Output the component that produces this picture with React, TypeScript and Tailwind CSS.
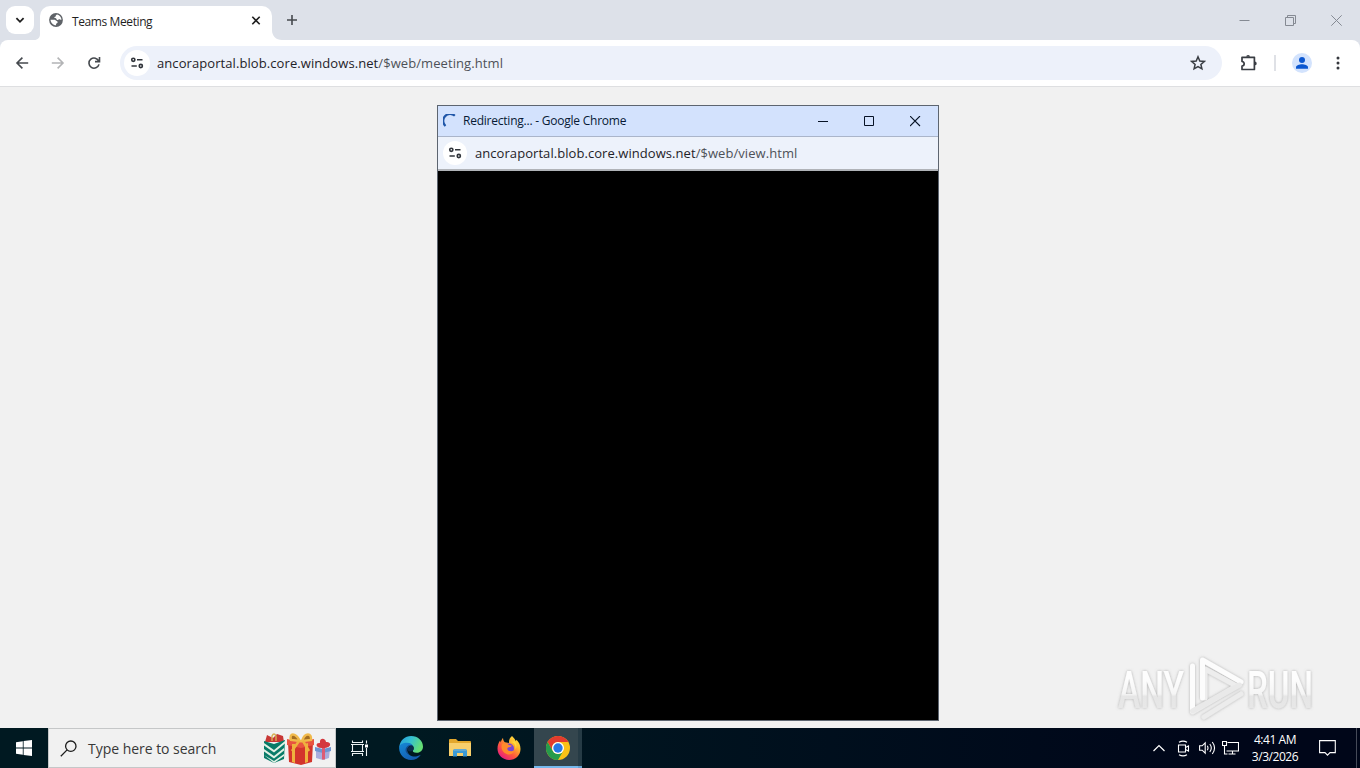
import type { ReactNode } from 'react';

const UI = "font-['Open_Sans','Noto_Sans',sans-serif]";

function TuneIcon() {
  return (
    <svg width="14" height="12" viewBox="0 0 14 12" fill="none" stroke="#30343a" strokeWidth="1.600">
      <circle cx="3.300" cy="2.800" r="1.600" />
      <path d="M7 2.800H12.500M1.500 9h5.300" />
      <circle cx="10.800" cy="9" r="1.600" />
    </svg>
  );
}

function BackIcon({ color, flip = false }: { color: string; flip?: boolean }) {
  return (
    <svg width="14" height="14" viewBox="0 0 14 14" fill="none" stroke={color} strokeWidth="1.600" className={flip ? '-scale-x-100' : ''}>
      <path d="M13.200 7H2M7.400 1.600 2 7l5.400 5.400" />
    </svg>
  );
}

function TabStrip() {
  return (
    <div className="flex h-10 shrink-0 bg-[#dde1e9]">
      <div className="mt-1.5 ml-1.5 flex h-7 w-7 items-center justify-center rounded-[9px] bg-white">
        <svg width="10" height="8" viewBox="0 0 10 8" fill="none" stroke="#1f1f1f" strokeWidth="1.800"><path d="m1.400 2.200 3.600 3.600 3.600-3.600" /></svg>
      </div>
      <svg width="6" height="6" viewBox="0 0 6 6" className="mt-[34px]"><path d="M6 0v6H0c4 0 6-2.500 6-6" fill="#fff" /></svg>
      <div className="mt-1.5 flex h-[34px] w-[232px] rounded-t-[10px] bg-white pt-[7px] pl-[9px]">
        <svg width="14" height="14" viewBox="0 0 14 14">
          <circle cx="7" cy="7" r="6.900" fill="#5f6368" />
          <path d="M8.200 1.500c-1 .3-1.600 1-1.500 1.900-.9.100-1.400.5-1.400 1.400.9.400 1.300.1 1.900.7.500.5.300 1.400 1.200 1.500.900 0 1-.8 1.600-.8.800 0 1.400.5 2.500.6-.1-2.500-1.800-4.600-4.300-5.300M1.500 6.700c.2 3 2.500 5.400 5.600 5.600l-.1-1.600c1.100-.3 1.700-.7 1.600-1.700C8.400 7.700 7 7.800 6.200 6.900 5.700 6.300 3.500 6.900 1.500 6.700" fill="#fff" />
        </svg>
        <span className="mt-px ml-[9px] w-[179px] text-[12px] leading-4 tracking-[-0.400px] whitespace-nowrap text-[#1f1f1f]">Teams Meeting</span>
        <svg width="10" height="9" viewBox="0 0 10 9" className="mt-[3px]" stroke="#1f1f1f" strokeWidth="1.600"><path d="m1.300.8 7.400 7.400M8.700.8 1.300 8.200" /></svg>
      </div>
      <svg width="10" height="10" viewBox="0 0 10 10" className="mt-[30px]"><path d="M0 0v10h10C4 10 0 6 0 0" fill="#fff" /></svg>
      <svg width="10" height="10" viewBox="0 0 10 10" className="mt-[15px] ml-[5px]" stroke="#45494e" strokeWidth="1.600"><path d="M5 0v10M0 5h10" /></svg>
      <div className="mt-[15px] mr-[18px] ml-auto flex gap-[35px]">
        <svg width="11" height="11" viewBox="0 0 11 11" stroke="#858a93"><path d="M.5 5.500h10" /></svg>
        <svg width="11" height="11" viewBox="0 0 11 11" fill="none" stroke="#858a93"><path d="M.5 2.500h8v8h-8zM2.500 2.500v-2h8v8h-2" /></svg>
        <svg width="11" height="11" viewBox="0 0 11 11" stroke="#858a93"><path d="m.3.3 10.400 10.400M10.700.3.3 10.700" /></svg>
      </div>
    </div>
  );
}

function Toolbar() {
  return (
    <div className="flex h-[47px] shrink-0 bg-[#dde1e9]">
      <div className="flex h-[47px] w-full items-center rounded-t-[8px] border-b border-[#dedfe1] bg-white pl-[15px]">
        <BackIcon color="#45494e" />
        <div className="ml-[22px] flex"><BackIcon color="#b3b4b6" flip /></div>
        <svg width="14" height="14" viewBox="0 0 14 14" className="ml-[22px]" fill="none" stroke="#45494e" strokeWidth="1.600">
          <path d="M11.800 5.200A5.100 5.100 0 1 0 12 8.400M12.500 1v4.600H8" />
        </svg>
        <div className="ml-[19px] flex h-[34px] w-[1102px] items-center rounded-full bg-[#edf1fa] pl-[4px]">
          <div className="flex h-[26px] w-[26px] items-center justify-center rounded-full bg-white"><TuneIcon /></div>
          <span className="ml-[7px] text-[13px] leading-5 tracking-[0.080px] whitespace-nowrap text-[#1f2228]">ancoraportal.blob.core.windows.net<span className="text-[#4d5158]">/$web/meeting.html</span></span>
          <svg width="16" height="16" viewBox="0 0 16 16" className="mr-4 ml-auto" fill="none" stroke="#393d43" strokeWidth="1.500">
            <path d="m8 1.800 1.800 4.200 4.500.4-3.400 3 1 4.400L8 11.500l-3.900 2.300 1-4.400-3.400-3 4.500-.4z" />
          </svg>
        </div>
        <svg width="18" height="18" viewBox="0 0 18 18" className="ml-[18px]" fill="none" stroke="#393d43" strokeWidth="1.700">
          <path d="M2 3.300h12.400v12.200H2v-3.400c2.900-.3 2.900-4.300 0-4.600z" strokeLinejoin="round" />
          <path d="M6.200 2.800a1.900 1.900 0 0 1 3.800 0zM14.800 7.500a1.900 1.900 0 0 1 0 3.800z" fill="#393d43" stroke="none" />
        </svg>
        <div className="ml-[16px] h-4 w-[2px] bg-[#dfe1e6]" />
        <svg width="20" height="20" viewBox="0 0 20 20" className="ml-4">
          <circle cx="10" cy="10" r="10" fill="#d3e3fd" />
          <circle cx="10" cy="6.900" r="3" fill="#0b57d0" />
          <path d="M4 15.700v-1.300c0-2.200 3.500-3.100 6-3.100s6 .9 6 3.100v1.300z" fill="#0b57d0" />
        </svg>
        <svg width="4" height="14" viewBox="0 0 4 14" className="ml-6" fill="#35383d"><circle cx="2" cy="2" r="1.500" /><circle cx="2" cy="7" r="1.500" /><circle cx="2" cy="12" r="1.500" /></svg>
      </div>
    </div>
  );
}

function Popup() {
  return (
    <div className="absolute top-[105px] left-[437px] flex h-[616px] w-[502px] flex-col border border-[#5d6570] bg-black">
      <div className="flex h-[31px] shrink-0 items-center border-b border-[#aab5ca] bg-[#d3e2fd] pr-[17px] pl-[5px]">
        <svg width="13" height="15" viewBox="0 0 13 15" fill="none" stroke="#1f56a8" strokeWidth="2.200"><path d="M2.500 12A6 6 0 0 1 11.800 1.700" /></svg>
        <span className="ml-[7px] text-[12px] leading-4 tracking-[-0.230px] whitespace-nowrap text-[#071a35]">Redirecting... - Google Chrome</span>
        <div className="ml-auto flex gap-[35px]">
          <svg width="11" height="11" viewBox="0 0 11 11" stroke="#071225"><path d="M0 5.500h10" /></svg>
          <svg width="11" height="11" viewBox="0 0 11 11" fill="none" stroke="#071225"><path d="M.5.500h9v9H.5z" /></svg>
          <svg width="11" height="11" viewBox="0 0 11 11" stroke="#071225" strokeWidth="1.100"><path d="m0 0 10 10M10 0 0 10" /></svg>
        </div>
      </div>
      <div className="flex h-[34px] shrink-0 items-center border-b-2 border-[#b0b3b8] bg-[#edf2fb] pl-[5px]">
        <div className="flex h-6 w-6 items-center justify-center rounded-full bg-white"><TuneIcon /></div>
        <span className="ml-2 text-[13px] leading-5 tracking-[0.060px] whitespace-nowrap text-[#1f2228]">ancoraportal.blob.core.windows.net<span className="text-[#4d5158]">/$web/view.html</span></span>
      </div>
    </div>
  );
}

function Watermark() {
  return (
    <svg width="250" height="74" viewBox="0 0 250 74" className="absolute top-[651px] left-[1110px]">
      <defs>
        <linearGradient id="fade" x1="0" y1="0" x2="0" y2="1"><stop offset=".3" stopColor="#fdfdfd" /><stop offset=".56" stopColor="#f5f5f5" /><stop offset=".6" stopColor="#e6e6e6" /><stop offset="1" stopColor="#e8e8e8" /></linearGradient>
        <filter id="soft" x="-10%" y="-10%" width="120%" height="120%"><feDropShadow dx="0" dy="0" stdDeviation="1.500" floodColor="#777" floodOpacity=".55" /></filter>
      </defs>
      <g filter="url(#soft)" fontFamily="Roboto, sans-serif" fontWeight="500" fontSize="51" fill="url(#fade)">
        <text x="8" y="57" textLength="66" lengthAdjust="spacingAndGlyphs">ANY</text>
        <text x="137" y="57" textLength="66" lengthAdjust="spacingAndGlyphs">RUN</text>
        <g fill="none" strokeLinecap="round" strokeLinejoin="round" strokeWidth="5">
          <path d="m94 66 37-23" stroke="#ececec" />
          <path d="m82.500 61 44-26L95 18v29" stroke="#ededed" />
          <path d="M82.500 60V15M92.500 47V9L131 31" stroke="#fcfcfc" />
          <path d="m82.500 60 47-26" stroke="#e9e9e9" />
        </g>
      </g>
    </svg>
  );
}

function Gifts() {
  return (
    <svg width="70" height="36" viewBox="0 0 70 36">
      <path d="m3 12 2-7 6 3 4-4 6 2 1 6z" fill="#c83735" />
      <path d="M10 11V6q2-4 4 0v5" stroke="#d5af52" strokeWidth="1.400" fill="none" />
      <path d="m2 11 10 3 11-4-1 19-10 4-10-5z" fill="#087b68" />
      <path d="m2 13 10 7L23 11v2.500l-11 9L2 15.500zM2 19l10 7 10-8v2.500l-10 8-10-7zM2 25l10 6 10-7v2l-10 7z" fill="#e2f1e5" />
      <path d="m26 12 13 4 12-4-1 20-11 3-12-3z" fill="#d3342c" />
      <path d="m25 9 14 3 13-3v6l-13 3-14-3z" fill="#e85340" />
      <path d="M30 14v18l3 1V14zM43 14v19l3-1V13z" fill="#efb13e" />
      <path d="M38 11C33 2 27 3 29 10zm2 0c3-9 10-8 9-1z" fill="#a36d22" stroke="#f0b94b" strokeWidth="2.400" />
      <path d="m37 11-7 10M41 11l6 10" stroke="#efb13e" strokeWidth="2.500" />
      <path d="m54 19 7 2 7-2-1 9-6 2-7-2z" fill="#a9addd" />
      <path d="m53 17 8 2 8-2v4l-8 2-8-2z" fill="#6e94d0" />
      <path d="M61 18c-8 1-8-6-3-5-1-6 6-5 6-1 5-1 7 6-3 6z" fill="#d4383e" />
      <path d="M60 18v11.500h3V18z" fill="#dd5c75" />
    </svg>
  );
}

function EdgeIcon() {
  return (
    <svg width="24" height="24" viewBox="0 0 24 24">
      <defs>
        <linearGradient id="eg" x1="0" y1="0" x2="1" y2=".4"><stop stopColor="#2499dc" /><stop offset=".5" stopColor="#35c0d1" /><stop offset="1" stopColor="#65de74" /></linearGradient>
        <linearGradient id="eb" x1="0" y1="0" x2=".7" y2="1"><stop stopColor="#1689d6" /><stop offset="1" stopColor="#135aad" /></linearGradient>
      </defs>
      <path d="M.3 11C1 4.300 6 0 12.100 0 19 0 24 5 24 10.500c0 4-3 6.300-6.500 6.300-3 0-4.200-1.200-3.500-2.200 2-2.800.1-6.300-4.500-6.300C4.600 8.300 1.500 9.800.3 11" fill="url(#eg)" />
      <path d="M.1 12C0 8.500 4 6.700 8 6.700c3.500 0 5.500 1.600 6 3.500-3-2-6.700 1.300-5.700 5.200 1.200 4.600 7.200 6.900 13.500 3.300C19.800 22 16 24 12 24 5.400 24 .2 18.600.1 12" fill="url(#eb)" />
      <path d="M14 10.200c-3-2-6.700 1.300-5.700 5.200.4 1.500 1.300 2.700 2.600 3.500-3.500-1-4.800-3.400-4.300-6 .6-3.300 5-5.500 7.400-2.700" fill="#123c79" opacity=".75" />
      <path d="M13.800 14.700c1.300-1.800.9-4-.8-5.300-2.300.1-4.300 1.900-4.800 4.200 1 2 3.100 2.500 5.600 1.100" fill="#0b2b4c" />
    </svg>
  );
}

function FolderIcon() {
  return (
    <svg width="22" height="18" viewBox="0 0 22 18">
      <path d="M0 1q0-1 1-1h6l2 2h12q1 0 1 1v4H0z" fill="#e3a72c" />
      <path d="M0 4h22v13H0z" fill="#f8cf6c" />
      <path d="M4 17.500V12q0-2 2-2h10q2 0 2 2v5.500h-4V14H8v3.500z" fill="#3c9bd6" />
      <path d="M5 10h12v2H5z" fill="#63a9d2" />
    </svg>
  );
}

function FirefoxIcon() {
  return (
    <svg width="24" height="24" viewBox="0 0 24 24">
      <defs><linearGradient id="ff" x1="1" y1="0" x2=".2" y2="1"><stop stopColor="#fff44f" /><stop offset=".35" stopColor="#ffb72b" /><stop offset=".65" stopColor="#ff593b" /><stop offset="1" stopColor="#e31587" /></linearGradient></defs>
      <path d="M15 0c2 2 3.300 3.500 3.800 5.200l.7-1.500C22 6 23.500 9.300 23.500 13c0 6.400-5.100 11-11.400 11S.5 19.200.5 12.800c0-3.300 1-6 2.600-8.200l.7 2C4.100 4.500 5 3 6 2c.1 2 .8 3.300 1.900 4.200L12 7c-.3-3 1-5.500 3-7" fill="url(#ff)" />
      <circle cx="12" cy="12.500" r="5" fill="#7845d7" />
      <path d="M5 8c2-1.700 5-.9 6.800.9l3 .5c-.5 1.600-2.300 1.500-3.700 2.100-1.600.7-.6 3.300 1.700 3.600 2.300.4 3-.6 4.400-.3-1 3-4.400 4.500-7.600 3.100C5 16 3.600 12 5 8" fill="#ff8a2b" />
      <path d="M13 6c4 0 6 3 5.500 7.500 1.700-3 1.100-6-.5-8.300" fill="#ffda3e" />
    </svg>
  );
}

function ChromeIcon() {
  return (
    <svg width="24" height="24" viewBox="0 0 24 24">
      <circle cx="12" cy="12" r="12" fill="#fbc116" />
      <path d="M1.600 6A12 12 0 0 1 22.400 6H12a6 6 0 0 0-5.200 9z" fill="#e33b2e" />
      <path d="M1.600 6A12 12 0 0 0 12 24l5.200-9A6 6 0 0 1 6.800 15z" fill="#269b4b" />
      <circle cx="12" cy="12" r="6" fill="#fff" /><circle cx="12" cy="12" r="4.700" fill="#2778e5" />
    </svg>
  );
}

function AppSlot({ children }: { children: ReactNode }) {
  return <div className="flex h-full w-[49px] items-center justify-center">{children}</div>;
}

function Taskbar() {
  return (
    <div className="flex h-10 shrink-0 items-center bg-linear-to-r from-[#001921] from-30% to-[#000619] to-90%">
      <div className="flex w-12 justify-center">
        <svg width="16" height="16" viewBox="0 0 16 16" fill="#fff"><path d="M0 2.200 6.800 1.200v6.400H0zM7.600 1.100 16 0v7.600H7.600zM0 8.400h6.800v6.400L0 13.800zM7.600 8.400H16V16l-8.400-1.100z" /></svg>
      </div>
      <div className="flex h-10 w-[288px] items-center border border-[#c5c7c8] bg-[#f1f1f1] pr-[3px] pl-[11px]">
        <svg width="17" height="17" viewBox="0 0 17 17" fill="none" stroke="#1d1d1d" strokeWidth="1.300"><circle cx="10.800" cy="6.200" r="5.200" /><path d="m7.100 9.900-6.300 6.300" /></svg>
        <span className="mt-[2px] ml-[11px] text-[14px] leading-5 tracking-[-0.030px] whitespace-nowrap text-[#383838]">Type here to search</span>
        <div className="ml-auto"><Gifts /></div>
      </div>
      <div className="flex w-12 justify-center">
        <svg width="18" height="17" viewBox="0 0 18 17" fill="none" stroke="#edf3f4" strokeWidth="1.100">
          <path d="M1.500.5v2h10v-2M1.500 16v-2.500h10V16M1.500 4.500v7M11.500 4.500v7M0 4.500h13M0 11.500h13M15.500.5v3M15.500 8v8" /><path d="M14 4.500h3v3h-3z" fill="#fff" stroke="none" />
        </svg>
      </div>
      <div className="ml-0.5 flex h-full">
        <AppSlot><EdgeIcon /></AppSlot>
        <AppSlot><FolderIcon /></AppSlot>
        <AppSlot><FirefoxIcon /></AppSlot>
      </div>
      <div className="ml-px flex h-10 w-11 items-center justify-center border-b-2 border-[#76b9ed] bg-[#34464e] pt-0.5 pl-1"><ChromeIcon /></div>
      <div className="h-10 w-1 border-b-2 border-[#67a3d2] bg-[#263b45]" />
      <div className="ml-auto flex h-10 items-center">
        <svg width="12" height="8" viewBox="0 0 12 8" fill="none" stroke="#fff" strokeWidth="1.200"><path d="M.5 7 6 1.500 11.500 7" /></svg>
        <svg width="13" height="17" viewBox="0 0 13 17" className="ml-3" fill="none" stroke="#fff" strokeWidth="1.100"><path d="M1.500 5h7v7h-7zM8.500 7.500l3-1.500v5l-3-1.500M2 2.300Q6 0 10 2.300M2 14.700q4 2.300 8 0" /></svg>
        <svg width="17" height="14" viewBox="0 0 17 14" className="ml-[9px]" fill="none" stroke="#fff" strokeWidth="1.100"><path d="M.6 4.800h2.600l3-3v10.400l-3-3H.6zM8.300 4.800q1.400 2.200 0 4.400M10.800 3q3 4 0 8M13.300 1q4.500 6 0 12" /></svg>
        <svg width="17" height="14" viewBox="0 0 17 14" className="ml-[6px]" fill="none" stroke="#fff" strokeWidth="1.100"><path d="M5.500 1.500h11v8.500h-12M.5.500h4v4h-4zM2.500 4.500v8.500h3M10.500 10v3M6.500 13h7" /></svg>
        <div className="ml-1 flex w-16 flex-col items-center text-[12px] leading-[17px] tracking-[-0.450px] whitespace-nowrap text-white"><span>4:41 AM</span><span>3/3/2026</span></div>
        <svg width="17" height="16" viewBox="0 0 17 16" className="ml-3" fill="none" stroke="#fff" strokeWidth="1.100"><path d="M.6.6h15.700v12H11l-2.500 2.500L6 12.600H.6z" /></svg>
        <div className="mr-[3px] ml-5 h-10 w-px bg-[#454a58]" />
      </div>
    </div>
  );
}

export default function App() {
  return (
    <div className={`relative flex h-[768px] w-[1360px] flex-col overflow-hidden bg-[#f1f1f1] ${UI}`}>
      <TabStrip />
      <Toolbar />
      <main className="flex-1" />
      <Taskbar />
      <Popup />
      <Watermark />
    </div>
  );
}
